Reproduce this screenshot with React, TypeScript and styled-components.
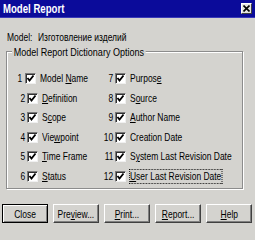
import React from "react";
import styled, { createGlobalStyle } from "styled-components";

const Global = createGlobalStyle`
  html, body { margin: 0; padding: 0; background: #d4d3cf; }
  body { font-family: "Liberation Sans", Arial, sans-serif; }
`;

const Win = styled.div`
  width: 255px;
  height: 240px;
  box-sizing: border-box;
  background: #d4d3cf;
  display: flex;
  flex-direction: column;
  font-family: "Liberation Sans", Arial, sans-serif;
  font-size: 11px;
  color: #000;
  overflow: hidden;
`;

/* Narrow text: the reference uses a condensed face, so the glyphs are squeezed horizontally */
const Txt = styled.span<{ $origin?: string; $focus?: boolean }>`
  display: inline-block;
  white-space: nowrap;
  transform: scaleX(0.77);
  transform-origin: ${(p) => p.$origin || "left"} center;
  ${(p) => (p.$focus ? "outline: 1px dotted #000; outline-offset: 0px;" : "")}
`;

const TitleBar = styled.div`
  height: 18px;
  background: #0b0b9a;
  border-bottom: 1px solid #3a3ab8;
  box-sizing: border-box;
  display: flex;
  align-items: center;
  justify-content: space-between;
  padding: 0 3px 0 3px;
`;

const Title = styled.span`
  display: inline-block;
  white-space: nowrap;
  transform: scaleX(0.8);
  transform-origin: left center;
  color: #fff;
  font-weight: bold;
  font-size: 12px;
  line-height: 14px;
`;

const CloseBox = styled.div`
  width: 11px;
  height: 11px;
  background: #e4e4e0;
  box-sizing: border-box;
  border: 1px solid;
  border-color: #fff #404040 #404040 #fff;
  display: flex;
  align-items: center;
  justify-content: center;
`;

const ModelRow = styled.div`
  margin: 12px 0 0 7px;
  line-height: 14px;
  display: flex;
`;

const ModelLabel = styled.div`
  width: 31px;
`;

const Group = styled.div`
  position: relative;
  margin: 7px 12px 0 6px;
  padding: 17px 0 2px 7px;
  border: 1px solid #8c8c8c;
  box-shadow: 1px 1px 0 #fff, inset 1px 1px 0 #fff;
`;

const Legend = styled.span`
  position: absolute;
  top: -7px;
  left: 5px;
  display: inline-block;
  white-space: nowrap;
  padding: 0 2px;
  line-height: 14px;
  background: #d4d3cf;
  transform: scaleX(0.82);
  transform-origin: left center;
`;

const Grid = styled.div`
  display: grid;
  grid-template-columns: 88px 1fr;
  grid-auto-flow: column;
  grid-template-rows: repeat(6, 19.5px);
`;

const Item = styled.div`
  display: flex;
  align-items: center;
  line-height: 13px;
`;

const Num = styled.div`
  width: 11px;
  margin-right: 2px;
  display: flex;
  justify-content: flex-end;
`;

const Box = styled.span`
  width: 11px;
  height: 11px;
  flex: none;
  box-sizing: border-box;
  background: #fff;
  border: 1px solid;
  border-color: #7a7a7a #f0f0f0 #f0f0f0 #7a7a7a;
  box-shadow: inset 1px 1px 0 #303030;
  display: flex;
  align-items: center;
  justify-content: center;
  margin-right: 4px;
`;

const Buttons = styled.div`
  margin: 15px 0 0 2px;
  display: grid;
  grid-template-columns: repeat(5, 46px);
  gap: 5px;
`;

const Btn = styled.div<{ $def?: boolean }>`
  height: 19px;
  box-sizing: border-box;
  display: flex;
  align-items: center;
  justify-content: center;
  border: 1px solid;
  border-color: ${(p) => (p.$def ? "#000" : "#fff #404040 #404040 #fff")};
  box-shadow: ${(p) =>
    p.$def
      ? "inset 1px 1px 0 #fff, inset -1px -1px 0 #808080"
      : "inset -1px -1px 0 #808080"};
  line-height: 14px;
`;

const Check = () => (
  <svg width="9" height="9" viewBox="0 0 9 9">
    <polyline points="1.5,4 3.5,6.5 7.5,1.5" fill="none" stroke="#000" strokeWidth="1.8" />
  </svg>
);

type Opt = { n: number; label: React.ReactNode; focus?: boolean };

const opts: Opt[] = [
  { n: 1, label: <>Model <u>N</u>ame</> },
  { n: 2, label: <><u>D</u>efinition</> },
  { n: 3, label: <>S<u>c</u>ope</> },
  { n: 4, label: <>Vie<u>w</u>point</> },
  { n: 5, label: <><u>T</u>ime Frame</> },
  { n: 6, label: <><u>S</u>tatus</> },
  { n: 7, label: <>Purpos<u>e</u></> },
  { n: 8, label: <>S<u>o</u>urce</> },
  { n: 9, label: <><u>A</u>uthor Name</> },
  { n: 10, label: <>Creation Date</> },
  { n: 11, label: <>S<u>y</u>stem Last Revision Date</> },
  { n: 12, label: <><u>U</u>ser Last Revision Date</>, focus: true },
];

export default function App() {
  return (
    <Win>
      <Global />
      <TitleBar>
        <Title>Model Report</Title>
        <CloseBox>
          <svg width="7" height="7" viewBox="0 0 7 7">
            <path d="M0.5 0.5 L6.5 6.5 M6.5 0.5 L0.5 6.5" stroke="#000" strokeWidth="1.6" />
          </svg>
        </CloseBox>
      </TitleBar>
      <ModelRow>
        <ModelLabel>
          <Txt>Model:</Txt>
        </ModelLabel>
        <Txt>Изготовление изделий</Txt>
      </ModelRow>
      <Group>
        <Legend>Model Report Dictionary Options</Legend>
        <Grid>
          {opts.map((o) => (
            <Item key={o.n}>
              <Num>
                <Txt $origin="right">{o.n}</Txt>
              </Num>
              <Box>
                <Check />
              </Box>
              <Txt $focus={o.focus}>{o.label}</Txt>
            </Item>
          ))}
        </Grid>
      </Group>
      <Buttons>
        <Btn $def>
          <Txt $origin="center">Close</Txt>
        </Btn>
        <Btn>
          <Txt $origin="center">Pre<u>v</u>iew...</Txt>
        </Btn>
        <Btn>
          <Txt $origin="center"><u>P</u>rint...</Txt>
        </Btn>
        <Btn>
          <Txt $origin="center"><u>R</u>eport...</Txt>
        </Btn>
        <Btn>
          <Txt $origin="center"><u>H</u>elp</Txt>
        </Btn>
      </Buttons>
    </Win>
  );
}
